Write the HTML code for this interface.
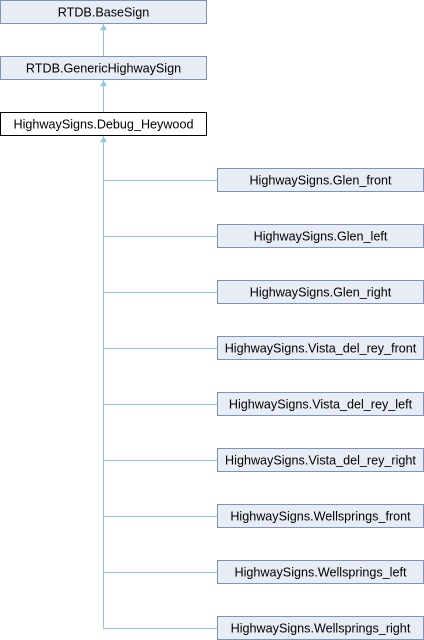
<!DOCTYPE html>
<html><head><style>
html,body{margin:0;padding:0;background:#fff;}
svg{display:block}
text{font-family:"Liberation Sans",sans-serif;font-size:12.6px;fill:#000;}
</style></head><body>
<svg width="424" height="640" xmlns="http://www.w3.org/2000/svg">
<g stroke="#8fc4e3" stroke-width="1" fill="none">
<line x1="103.5" y1="24" x2="103.5" y2="56"/>
<line x1="103.5" y1="80" x2="103.5" y2="112"/>
<line x1="103.5" y1="136" x2="103.5" y2="628.5"/>
<line x1="103.5" y1="180.5" x2="217" y2="180.5"/>
<line x1="103.5" y1="236.5" x2="217" y2="236.5"/>
<line x1="103.5" y1="292.5" x2="217" y2="292.5"/>
<line x1="103.5" y1="348.5" x2="217" y2="348.5"/>
<line x1="103.5" y1="404.5" x2="217" y2="404.5"/>
<line x1="103.5" y1="460.5" x2="217" y2="460.5"/>
<line x1="103.5" y1="516.5" x2="217" y2="516.5"/>
<line x1="103.5" y1="572.5" x2="217" y2="572.5"/>
<line x1="103.5" y1="628.5" x2="217" y2="628.5"/>
</g>
<g fill="#8fc4e3">
<polygon points="103.5,24.5 100,30 107,30"/>
<polygon points="103.5,80.5 100,86 107,86"/>
<polygon points="103.5,136.5 100,142 107,142"/>
</g>
<g fill="#e8ecf5" stroke="#7f93b9">
<rect x="0.5" y="0.5" width="206" height="23"/>
<rect x="0.5" y="56.5" width="206" height="23"/>
<rect x="217.5" y="168.5" width="206" height="23"/>
<rect x="217.5" y="224.5" width="206" height="23"/>
<rect x="217.5" y="280.5" width="206" height="23"/>
<rect x="217.5" y="336.5" width="206" height="23"/>
<rect x="217.5" y="392.5" width="206" height="23"/>
<rect x="217.5" y="448.5" width="206" height="23"/>
<rect x="217.5" y="504.5" width="206" height="23"/>
<rect x="217.5" y="560.5" width="206" height="23"/>
<rect x="217.5" y="616.5" width="206" height="23"/>
</g>
<rect x="0.5" y="112.5" width="206" height="23" fill="#fff" stroke="#000"/>
<g text-anchor="middle">
<text x="103.5" y="16.5">RTDB.BaseSign</text>
<text x="103.5" y="72.5">RTDB.GenericHighwaySign</text>
<text x="103.5" y="128.5">HighwaySigns.Debug_Heywood</text>
<text x="320.5" y="184.5">HighwaySigns.Glen_front</text>
<text x="320.5" y="240.5">HighwaySigns.Glen_left</text>
<text x="320.5" y="296.5">HighwaySigns.Glen_right</text>
<text x="320.5" y="352.5">HighwaySigns.Vista_del_rey_front</text>
<text x="320.5" y="408.5">HighwaySigns.Vista_del_rey_left</text>
<text x="320.5" y="464.5">HighwaySigns.Vista_del_rey_right</text>
<text x="320.5" y="520.5">HighwaySigns.Wellsprings_front</text>
<text x="320.5" y="576.5">HighwaySigns.Wellsprings_left</text>
<text x="320.5" y="632.5">HighwaySigns.Wellsprings_right</text>
</g>
</svg>
</body></html>
